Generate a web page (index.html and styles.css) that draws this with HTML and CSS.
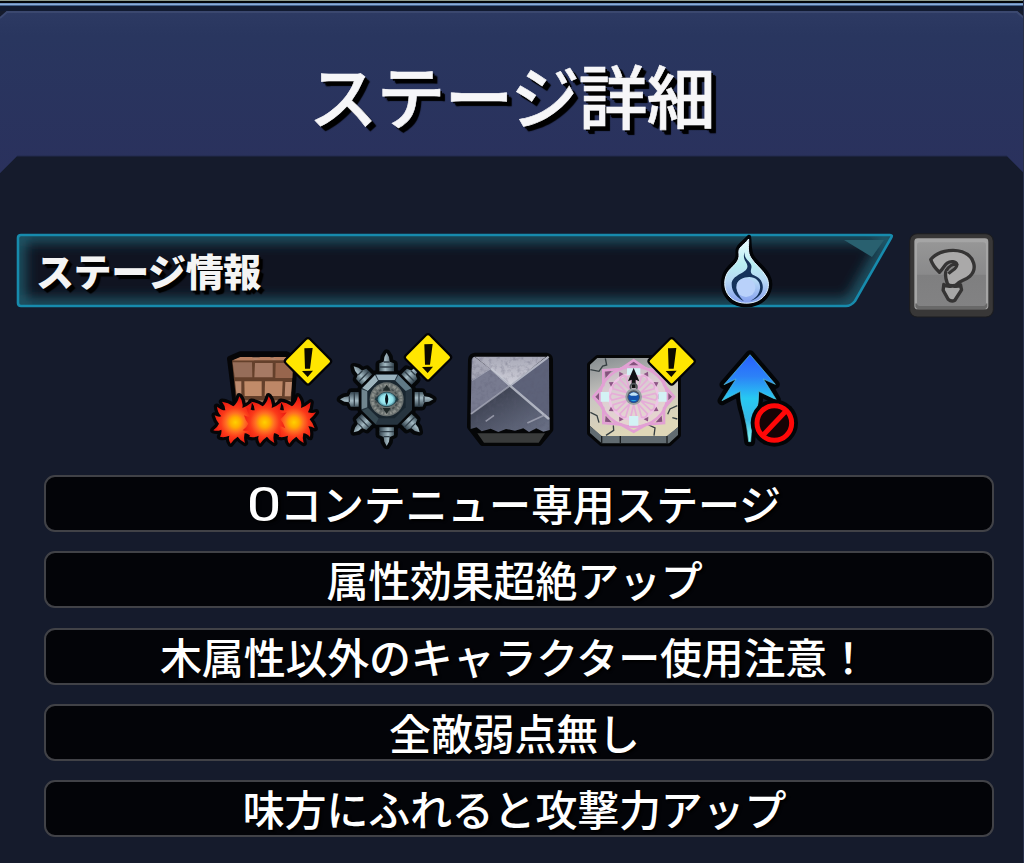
FILE: index.html
```
<!DOCTYPE html>
<html lang="ja">
<head>
    <meta charset="UTF-8">
    <meta name="viewport" content="width=device-width, initial-scale=1.0">
    <title>ステージ詳細</title>
    <link rel="stylesheet" href="styles.css">
</head>
<body>
    <svg class="defs" width="0" height="0">
        <defs>
            <!-- warning badge, centred on 0,0 -->
            <g id="warning">
                <path d="M0-61 L61 0 L0 61 L-61 0Z" fill="#030305" stroke="#030305" stroke-width="23" stroke-linejoin="round"/>
                <path d="M0-61 L61 0 L0 61 L-61 0Z" fill="#ffe600" stroke="#ffe600" stroke-width="10" stroke-linejoin="round"/>
                <path d="M-11-39 L14-40 L6 22 L-9 22Z M-18 29 L15 28 L-1 47Z" fill="#0c0a00"/>
            </g>
            <radialGradient id="fireFill" gradientUnits="userSpaceOnUse" cx="0" cy="0" r="70">
                <stop offset="0" stop-color="#ffd000"/>
                <stop offset=".22" stop-color="#ffac00"/>
                <stop offset=".4" stop-color="#ff7023"/>
                <stop offset=".62" stop-color="#fb3a1a"/>
                <stop offset="1" stop-color="#ea1810"/>
            </radialGradient>
            <path id="fire" d="M-6-48 Q6-56 12-78 Q25-62 21-43 Q36-48 50-60 Q49-42 42-30 Q54-26 66-30 Q58-18 47-9 Q57 2 62 18 Q50 11 43 12 Q51 26 48 44 Q37 32 28 33 Q24 48 29 62 Q14 54 7 43 Q-5 51-14 64 Q-22 53-18 40 Q-34 47-46 43 Q-40 33-42 22 Q-54 28-66 24 Q-53 14-49 4 Q-58-6-62-21 Q-50-14-42-18 Q-54-31-55-47 Q-40-35-30-36 Q-30-50-40-62 Q-22-60-6-48Z"/>
            <linearGradient id="metal" x2="1" y2="0">
                <stop offset="0" stop-color="#465963"/>
                <stop offset=".4" stop-color="#a4bac3"/>
                <stop offset="1" stop-color="#33434e"/>
            </linearGradient>
            <g id="spike">
                <path d="M-22-84 L-22-108 L-9-113 L-7-127 L0-140 L7-127 L9-113 L22-108 L22-84Z" fill="url(#metal)"/>
                <path d="M-22-97 H22 M-9-112 H9" stroke="#303e48" stroke-width="4"/>
            </g>
            <path id="spikeEdge" d="M-22-72 L-22-106 L-9-111 L-7-127 L0-138 L7-127 L9-111 L22-106 L22-72Z"/>
        </defs>
    </svg>

    <div class="screen">
        <header class="title-bar">
            <svg class="title-bg" viewBox="0 0 1024 175" width="1024" height="175">
                <defs>
                    <linearGradient id="barFill" x2="0" y2="1">
                        <stop offset="0" stop-color="#2d3a63"/>
                        <stop offset=".15" stop-color="#29365f"/>
                        <stop offset="1" stop-color="#2a315d"/>
                    </linearGradient>
                </defs>
                <path d="M0 18 L7 11 H1017 L1024 18 V173 L1007 156 H17 L0 173Z" fill="url(#barFill)"/>
                <path d="M0 18 L7 12 H1017 L1024 18" fill="none" stroke="#3b486f" stroke-width="2"/>
                <path d="M0 173 L17 156 H1007 L1024 173" fill="none" stroke="#222a4e" stroke-width="1"/>
            </svg>
            <h1>ステージ詳細</h1>
        </header>

        <main class="content">
            <div class="section-head">
                <div class="ribbon">
                    <svg class="ribbon-bg" viewBox="0 0 880 78" width="880" height="78">
                        <defs>
                            <clipPath id="ribbonClip"><path d="M4 3 H877 L838 71 Q835 74 831 74 H6 Q3 74 3 71Z"/></clipPath>
                            <filter id="glow" x="-5%" y="-50%" width="110%" height="200%"><feGaussianBlur stdDeviation="7"/></filter>
                        </defs>
                        <path d="M6 3 H877 L838 70 Q835 74 831 74 H6 Q3 74 3 71 V6 Q3 3 6 3Z" fill="#101421"/>
                        <g clip-path="url(#ribbonClip)">
                            <path d="M3 3 H877 L836 74 H3Z" fill="none" stroke="#246577" stroke-width="12" filter="url(#glow)"/>
                            <path d="M829 8 H869 L857 25Z" fill="#29606f"/>
                        </g>
                        <path d="M6 3 H875 Q878 3 876 6 L840 69 Q836 74 831 74 H6 Q3 74 3 71 V6 Q3 3 6 3Z" fill="none" stroke="#178bad" stroke-width="2.6"/>
                    </svg>
                    <h2>ステージ情報</h2>
                    <svg class="flame" viewBox="54 30 174 240" width="58" height="80">
                        <defs>
                            <linearGradient id="flameFill" x2="0" y2="1">
                                <stop offset="0" stop-color="#eafcff"/>
                                <stop offset=".4" stop-color="#b8eef2"/>
                                <stop offset=".65" stop-color="#b7d8f5"/>
                                <stop offset="1" stop-color="#849fef"/>
                            </linearGradient>
                        </defs>
                        <path d="M147 48 C127 69 110 75 113 97 C115 120 98 127 82 147 C66 168 64 205 84 229 C103 253 142 259 174 245 C207 229 219 193 204 164 C192 141 169 127 157 108 C146 87 150 70 147 48Z" fill="url(#flameFill)" stroke="#020407" stroke-width="13" stroke-linejoin="round"/>
                        <path d="M146 54 C130 75 113 78 117 99 C119 122 103 130 86 150 C70 171 70 204 87 225 C105 247 141 252 170 241 C204 226 213 191 199 167 C186 144 165 130 153 111 C141 92 147 76 146 54Z" fill="url(#flameFill)" stroke="#e2f4ff" stroke-width="3"/>
                        <path d="M134 93 C125 118 145 124 142 139 C138 159 95 161 95 190 C95 214 112 231 132 241 C108 216 100 188 122 175 C151 158 184 172 180 203 C177 223 164 232 151 240 C179 231 195 210 186 185 C179 165 162 166 155 158 C147 148 161 139 150 126 C139 112 133 111 134 93Z" fill="#15335b"/>
                        <circle cx="138" cy="200" r="28" fill="#b9d1fa"/>
                    </svg>
                </div>
                <button class="help" aria-label="ヘルプ">
                    <svg viewBox="627 41 254 254" width="85" height="85">
                        <defs>
                            <linearGradient id="helpFill" x2="0" y2="1">
                                <stop offset="0" stop-color="#969696"/>
                                <stop offset=".5" stop-color="#8a8a8b"/>
                                <stop offset=".52" stop-color="#7f7f80"/>
                                <stop offset="1" stop-color="#828283"/>
                            </linearGradient>
                        </defs>
                        <rect x="629" y="43" width="250" height="249" rx="22" fill="#383737" stroke="#1b1c20" stroke-width="3"/>
                        <rect x="643" y="57" width="221" height="212" rx="10" fill="#a5a5a5"/>
                        <path d="M646 252 H861 V260 Q859 269 850 269 H657 Q648 269 646 260Z" fill="#686868"/>
                        <rect x="651" y="69" width="206" height="190" rx="8" fill="url(#helpFill)"/>
                        <path d="M692 120 C710 98 752 86 786 97 C823 110 832 149 809 170 C796 182 777 184 772 192 C768 201 744 201 741 190 C737 178 733 163 739 153 C744 142 765 148 770 135 C767 126 752 124 741 131 C732 137 730 147 718 158 C705 146 697 136 692 120Z" fill="#aaa9a9" stroke="#353434" stroke-width="10" stroke-linejoin="round"/>
                        <path d="M739 154 C744 139 760 133 770 135 C772 148 755 152 745 163" fill="#858585" stroke="#353434" stroke-width="9" stroke-linejoin="round"/>
                        <path d="M731 195 Q742 203 757 199 Q772 203 781 196 L784 211 L764 242 Q754 248 744 239 L729 212Z" fill="#a6a6a6" stroke="#353434" stroke-width="10" stroke-linejoin="round"/>
                    </svg>
                </button>
            </div>

            <div class="gimmicks">
                <!-- damage wall -->
                <svg viewBox="0 0 375 390" width="125" height="130">
                    <path d="M90 101 L121 88 H260 L284 101 L274 260 H110Z" fill="#b68569" stroke="#050507" stroke-width="18" stroke-linejoin="round"/>
                    <path d="M96 106 H280 L271 260 H112Z" fill="#64402b"/>
                    <path d="M98 106 L121 96 H156 L163 106Z M170 105 L181 96 H210 L219 105Z M229 105 L219 96 H261 L276 105Z" fill="#b77f60"/>
                    <path d="M98 112 H156 L157 157 H104Z" fill="#966d59"/>
                    <path d="M165 114 H218 V157 H163Z" fill="#a67a64"/>
                    <path d="M227 114 H279 L277 159 H226Z" fill="#98664d"/>
                    <path d="M105 169 H124 V214 H110Z M256 171 H276 L272 214 H254Z" fill="#bd8b6f"/>
                    <path d="M133 169 H185 V213 H134Z" fill="#c18b69"/>
                    <path d="M195 169 H248 L246 213 H194Z" fill="#bd8767"/>
                    <path d="M112 226 H155 V260 H116Z M164 226 H216 V260 H164Z M224 226 H272 L270 260 H224Z" fill="#a27058"/>
                    <g fill="#050507" stroke="#050507" stroke-width="19" stroke-linejoin="round">
                        <use href="#fire" x="106" y="292"/>
                        <use href="#fire" x="194" y="292"/>
                        <use href="#fire" x="282" y="292"/>
                    </g>
                    <g fill="url(#fireFill)">
                        <use href="#fire" x="106" y="292"/>
                        <use href="#fire" x="282" y="292"/>
                        <use href="#fire" x="194" y="292"/>
                    </g>
                    <use href="#warning" x="324" y="109"/>
                </svg>

                <!-- mine -->
                <svg viewBox="0 0 390 390" width="130" height="130">
                    <defs>
                        <radialGradient id="eyeFill">
                            <stop offset="0" stop-color="#b4ffff"/>
                            <stop offset=".7" stop-color="#8fdde8"/>
                            <stop offset="1" stop-color="#427d8b"/>
                        </radialGradient>
                    </defs>
                    <g transform="translate(185 223)">
                        <g fill="#050709" stroke="#050709" stroke-width="23" stroke-linejoin="round">
                            <use href="#spikeEdge"/>
                            <use href="#spikeEdge" transform="rotate(45)"/>
                            <use href="#spikeEdge" transform="rotate(90)"/>
                            <use href="#spikeEdge" transform="rotate(135)"/>
                            <use href="#spikeEdge" transform="rotate(180)"/>
                            <use href="#spikeEdge" transform="rotate(225)"/>
                            <use href="#spikeEdge" transform="rotate(270)"/>
                            <use href="#spikeEdge" transform="rotate(315)"/>
                            <path d="M-32-76 H32 L76-32 V32 L32 76 H-32 L-76 32 V-32Z"/>
                        </g>
                        <use href="#spike"/>
                        <use href="#spike" transform="rotate(45)"/>
                        <use href="#spike" transform="rotate(90)"/>
                        <use href="#spike" transform="rotate(135)"/>
                        <use href="#spike" transform="rotate(180)"/>
                        <use href="#spike" transform="rotate(225)"/>
                        <use href="#spike" transform="rotate(270)"/>
                        <use href="#spike" transform="rotate(315)"/>
                        <path d="M-32-76 H32 L76-32 V32 L32 76 H-32 L-76 32 V-32Z" fill="#26343f"/>
                        <path d="M-32-74 H32 L24-57 H-24Z" fill="#9bb3bf"/>
                        <path d="M-35-73 L-73-34 L-56-25 L-26-56Z" fill="#9eb4bd"/>
                        <path d="M-75-30 V30 L-58 24 V-24Z" fill="#70858f"/>
                        <path d="M35-73 L74-33 L57-25 L26-56Z" fill="#5f7986"/>
                        <path d="M-73 34 L-33 74 L-24 57 L-56 26Z" fill="#364952"/>
                        <path d="M-24-57 H24 L57-24 V24 L24 57 H-24 L-57 24 V-24Z" fill="#19262f"/>
                        <circle r="51" fill="#686f6e"/>
                        <circle r="43" fill="none" stroke="#8b908c" stroke-width="8" stroke-dasharray="5 7 10 4"/>
                        <circle r="33" fill="none" stroke="#464d4e" stroke-width="5" stroke-dasharray="8 5"/>
                        <path d="M-12-26 L0-44 L12-26Z M-12 26 L0 44 L12 26Z" fill="#202929"/>
                        <path d="M-36 0 Q0-46 36 0 Q0 46-36 0Z" fill="#1c3740"/>
                        <ellipse rx="27" ry="21" fill="url(#eyeFill)"/>
                        <path d="M0-18 Q10 0 0 18 Q-10 0 0-18Z" fill="#061019"/>
                    </g>
                    <use href="#warning" x="309" y="97"/>
                </svg>

                <!-- stone block -->
                <svg viewBox="0 -45 360 390" width="120" height="130">
                    <defs>
                        <linearGradient id="stoneTop" x2="0" y2="1"><stop offset="0" stop-color="#a9aab8"/><stop offset="1" stop-color="#d0d0da"/></linearGradient>
                        <linearGradient id="stoneLow" x2="1" y2="1"><stop offset="0" stop-color="#303442"/><stop offset="1" stop-color="#6c7389"/></linearGradient>
                        <filter id="grain" x="0" y="0" width="100%" height="100%">
                            <feTurbulence type="fractalNoise" baseFrequency=".08" numOctaves="3" seed="4"/>
                            <feColorMatrix values="0 0 0 0 .1  0 0 0 0 .1  0 0 0 0 .16  2 0 0 0 -.9"/>
                            <feComposite in2="SourceGraphic" operator="in"/>
                        </filter>
                    </defs>
                    <path d="M60 48 H274 Q283 49 284 58 L285 268 L252 308 H83 L46 260 L49 60 Q50 49 60 48Z" fill="#050607" stroke="#050607" stroke-width="20" stroke-linejoin="round"/>
                    <path d="M67 280 H270 L251 308 H87Z" fill="#393b3b"/>
                    <path d="M60 50 H273 L166 136Z" fill="url(#stoneTop)"/>
                    <path d="M58 50 Q49 53 50 64 L47 225 L166 136Z" fill="#787b90"/>
                    <path d="M58 50 Q50 52 50 120 L107 87Z" fill="#a5a6b5"/>
                    <path d="M274 51 Q283 52 282 64 L283 240 L166 136Z" fill="#5d6279"/>
                    <path d="M47 225 L166 136 L284 235 V270 L265 275 L244 265 L222 276 L205 265 L180 272 L153 267 L130 276 L107 266 L80 274 L65 262 L47 267Z" fill="url(#stoneLow)"/>
                    <path d="M60 50 H273 Q283 51 283 64 V270 L47 267 L50 64 Q50 51 60 50Z" filter="url(#grain)" opacity=".4"/>
                    <path d="M165 137 L281 50 M165 137 L282 237 M165 137 L108 86" stroke="#c6c9d4" stroke-width="7" fill="none" opacity=".8"/>
                    <path d="M165 137 L48 222 M92 244 L117 226 M217 249 L271 224" stroke="#a5a8b7" stroke-width="5" fill="none" opacity=".8"/>
                    <path d="M108 86 L51 122" stroke="#aeb0bf" stroke-width="2"/>
                </svg>

                <!-- magic circle panel -->
                <svg viewBox="0 -15 390 390" width="130" height="130">
                    <defs>
                        <linearGradient id="panelFill" x2=".3" y2="1"><stop offset="0" stop-color="#858c8f"/><stop offset=".5" stop-color="#c9c6c1"/><stop offset="1" stop-color="#dfd7b8"/></linearGradient>
                        <g id="petal">
                            <path d="M0-24 L-10-65 Q0-76 10-65Z" fill="none" stroke="#e6add8" stroke-width="5"/>
                            <path d="M-8-74 L0-86 L8-74Z" fill="#8e5586"/>
                        </g>
                    </defs>
                    <path d="M68 84 H283 L309 105 V315 L282 340 H80 L45 309 V104Z" fill="#777c7d" stroke="#050607" stroke-width="18" stroke-linejoin="round"/>
                    <path d="M67 84 H283 L309 105 V292 L276 318 H80 L45 288 V104Z" fill="url(#panelFill)"/>
                    <path d="M45 288 L80 318 H276 L309 292 V315 L282 340 H80 L45 309Z" fill="#616b70"/>
                    <path d="M80 318 V340 M276 318 V340 M136 318 V340" stroke="#191d1f" stroke-width="4"/>
                    <path d="M46 119 L72 124 L83 108 L95 105 L91 85 M46 247 L66 257 L72 278 M93 316 L116 301 L115 286 M237 317 L240 294 L215 282 M307 227 L285 237 L278 253 M307 267 L292 263" fill="none" stroke="#363f42" stroke-width="4"/>
                    <g transform="translate(176 200)">
                        <ellipse rx="104" ry="95" fill="#f0d5e5" opacity=".5"/>
                        <g fill="none" stroke="#e2a0d4" stroke-width="8">
                            <path d="M-91-79 L-39-83 L0-109 L39-83 L91-79 L91-35 L121 0 L91 35 L91 79 L39 83 L0 105 L-39 83 L-91 79 L-91 35 L-121 0 L-91-35Z"/>
                            <ellipse rx="101" ry="90"/>
                            <ellipse rx="73" ry="68" stroke="#efc5e6"/>
                        </g>
                        <use href="#petal"/>
                        <use href="#petal" transform="rotate(30)"/>
                        <use href="#petal" transform="rotate(60)"/>
                        <use href="#petal" transform="rotate(90)"/>
                        <use href="#petal" transform="rotate(120)"/>
                        <use href="#petal" transform="rotate(150)"/>
                        <use href="#petal" transform="rotate(180)"/>
                        <use href="#petal" transform="rotate(210)"/>
                        <use href="#petal" transform="rotate(240)"/>
                        <use href="#petal" transform="rotate(270)"/>
                        <use href="#petal" transform="rotate(300)"/>
                        <use href="#petal" transform="rotate(330)"/>
                        <path d="M-86-75 L-66-77 L-84-57Z M86 75 L66 77 L84 57Z M-86 75 L-66 77 L-84 57Z M-14-94 L0-105 L14-94Z M-115 0 L-104-11 V11Z M115 0 L104-11 V11Z" fill="#86507e"/>
                        <path d="M-99-14 H-74 V15 H-99Z M74-14 H99 V15 H74Z M-14 58 H14 V87 H-14Z M-20-85 H20 V-65 H-20Z" fill="#d3f2f5"/>
                        <path d="M-17-46 L0-86 L17-46 L6-51 V-26 H-6 V-51Z" fill="#101213"/>
                        <circle cy="-29" r="10" fill="none" stroke="#4d5358" stroke-width="5"/>
                        <circle r="25" fill="#999fa4"/>
                        <circle r="19" fill="#4b5565"/>
                        <circle cy="2" r="16" fill="#1252ad"/>
                        <path d="M-14-6 Q0-21 14-6 Q0 1-14-6Z" fill="#bfe2f5"/>
                        <path d="M-9 10 Q0 18 9 10Z" fill="#28a5dc"/>
                    </g>
                    <use href="#warning" x="290" y="94"/>
                </svg>

                <!-- speed up disabled -->
                <svg viewBox="0 -30 315 390" width="105" height="130">
                    <defs>
                        <linearGradient id="arrowFill" gradientUnits="userSpaceOnUse" x1="0" y1="60" x2="0" y2="320">
                            <stop offset="0" stop-color="#2860ff"/>
                            <stop offset=".25" stop-color="#2c82f7"/>
                            <stop offset=".5" stop-color="#27c9f2"/>
                            <stop offset=".75" stop-color="#36b9e6"/>
                            <stop offset="1" stop-color="#8dfff0"/>
                        </linearGradient>
                    </defs>
                    <path d="M135 59 L211 148 L181 136 L214 194 L161 169 Q163 205 150 238 Q140 270 137 320 H131 Q126 270 116 233 Q105 199 106 169 L51 197 L87 136 L57 149Z" fill="#030507" stroke="#030507" stroke-width="27" stroke-linejoin="round"/>
                    <path d="M135 59 L211 148 L175 132 L214 194 L161 169 Q163 205 150 238 Q140 270 137 320 H131 Q126 270 116 233 Q105 199 106 169 L51 197 L93 132 L57 149Z" fill="url(#arrowFill)" stroke="#58c6dc" stroke-width="2"/>
                    <circle cx="208" cy="264" r="71" fill="#030507"/>
                    <circle cx="208" cy="264" r="52" fill="#160305" stroke="#ff0808" stroke-width="15"/>
                    <path d="M174 301 L242 229" stroke="#ff0808" stroke-width="15"/>
                </svg>
            </div>

            <ul class="rules">
                <li><span class="zero">0</span>コンテニュー専用ステージ</li>
                <li>属性効果超絶アップ</li>
                <li>木属性以外のキャラクター使用注意！</li>
                <li>全敵弱点無し</li>
                <li>味方にふれると攻撃力アップ</li>
            </ul>
        </main>
    </div>
</body>
</html>
```
FILE: styles.css
```
* {
    box-sizing: border-box;
}
body {
    margin: 0;
    background-color: #151b2d;
    font-family: "Noto Sans CJK JP", sans-serif;
    color: #fff;
}
.defs {
    position: absolute;
}
.screen {
    width: 1024px;
    height: 863px;
    overflow: hidden;
    background: linear-gradient(#8b998d 0 1px, #020509 1px 3px, #6b8ebc 3px 4px, #8aabd7 4px 5px, #40618c 5px 6px, #111a30 6px 11px, #151b2c 11px);
    border-right: 1px solid #28304a;
}
.title-bar {
    position: relative;
    height: 175px;
    padding-top: 42px;
}
.title-bg {
    position: absolute;
    top: 0;
    left: 0;
}
h1 {
    position: relative;
    margin: 0;
    text-align: center;
    font-size: 69px;
    line-height: 104px;
    font-weight: 500;
    letter-spacing: -1.2px;
    color: #f6f6f8;
    -webkit-text-stroke: 0.6px #f6f6f8;
    text-shadow: 2px 2px 0 #000, 4px 4px 1px #000, 5px 5px 1px #000;
}
.content {
    padding: 56px 29px 0 15px;
}
.section-head {
    display: flex;
    align-items: flex-start;
    gap: 14px;
    height: 94px;
}
.ribbon {
    position: relative;
    display: flex;
    flex: none;
    justify-content: space-between;
    width: 880px;
    height: 78px;
    padding: 0 119px 0 21px;
}
.ribbon-bg {
    position: absolute;
    top: 1px;
    left: 0;
}
h2 {
    position: relative;
    margin: 0;
    font-size: 38px;
    line-height: 77px;
    font-weight: 900;
    letter-spacing: -0.4px;
    color: #f4f4f4;
    text-shadow: 2px 2px 1px #000, 4px 4px 1px #000;
}
.flame {
    position: relative;
}
.help {
    margin: 2px 0 0;
    padding: 0;
    border: none;
    background: none;
    cursor: pointer;
}
.help svg,
.gimmicks svg {
    display: block;
    overflow: visible;
}
.gimmicks {
    display: flex;
    height: 130px;
    padding-left: 185px;
}
.gimmicks svg {
    flex: none;
}
.rules {
    display: flex;
    flex-direction: column;
    gap: 19.3px;
    margin: 20px 0 0;
    padding: 0 0 0 29px;
    list-style: none;
}
.rules li {
    height: 57px;
    padding-right: 9px;
    border: 2px solid #414247;
    border-radius: 11px;
    background-color: #030408;
    text-align: center;
    font-size: 42px;
    line-height: 52px;
    font-weight: 500;
    letter-spacing: -0.2px;
    white-space: nowrap;
    text-shadow: 2px 2px 2px #000;
}
.zero {
    display: inline-block;
    width: 32px;
    font-family: Roboto, sans-serif;
    font-size: 48px;
    line-height: 40px;
    font-weight: 400;
    transform: scaleX(1.3);
}
```
